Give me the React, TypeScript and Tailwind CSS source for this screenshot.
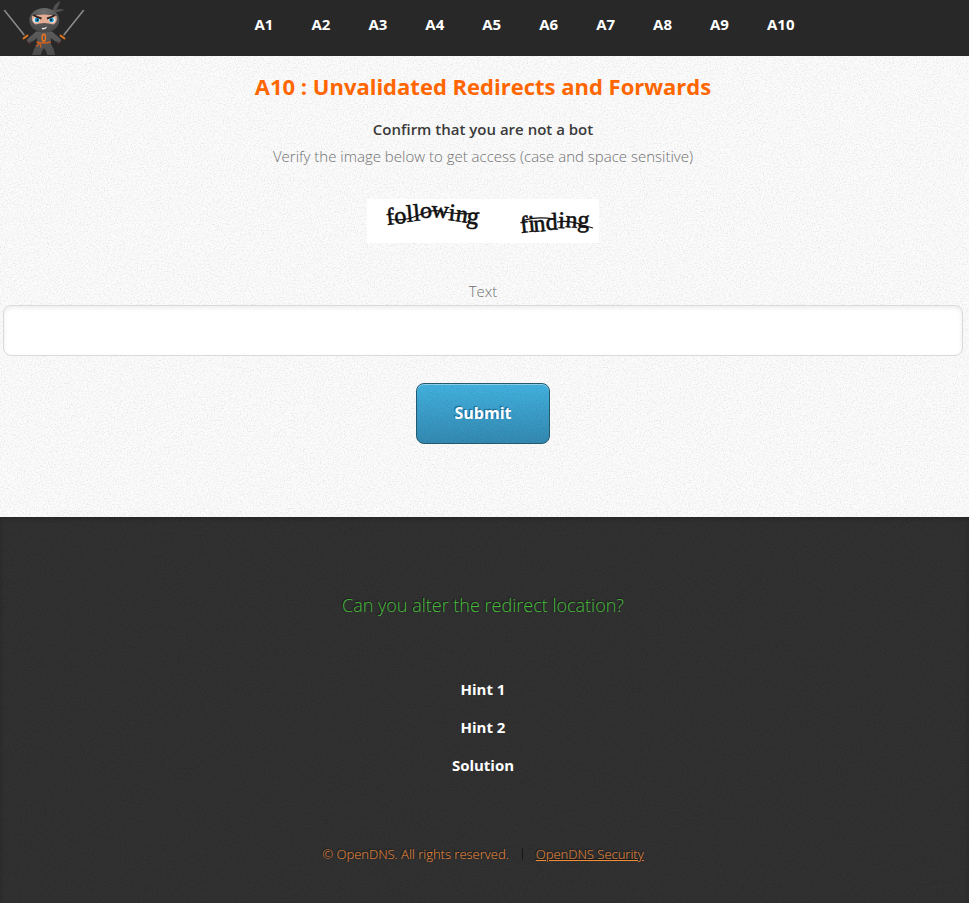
const links = ["A1", "A2", "A3", "A4", "A5", "A6", "A7", "A8", "A9", "A10"];

function Grain({ id, dark = false }: { id: string; dark?: boolean }) {
  return (
    <svg aria-hidden="true" className="pointer-events-none absolute inset-0 h-full w-full">
      <filter id={id} x="0" y="0" width="100%" height="100%">
        <feTurbulence type="fractalNoise" baseFrequency="0.7" numOctaves="3" stitchTiles="stitch" />
        <feColorMatrix
          values={
            dark
              ? "0 0 0 0 0  0 0 0 0 0  0 0 0 0 0  0.3 0 0 0 -0.12"
              : "0 0 0 0 0  0 0 0 0 0  0 0 0 0 0  0.2 0 0 0 -0.09"
          }
        />
      </filter>
      <rect width="100%" height="100%" filter={`url(#${id})`} />
    </svg>
  );
}

function Ninja() {
  return (
    <svg viewBox="0 0 88 56" className="block h-14 w-22" role="img" aria-label="Ninja">
      <defs>
        <linearGradient id="suit" x1="0" y1="0" x2="0" y2="1">
          <stop offset="0" stopColor="#5c5c5c" />
          <stop offset="1" stopColor="#4b4b4b" />
        </linearGradient>
        <radialGradient id="hood" cx="0.5" cy="0.15" r="0.85">
          <stop offset="0" stopColor="#6c6c6c" />
          <stop offset="1" stopColor="#464646" />
        </radialGradient>
      </defs>
      <path d="M53 11C53 6 56 3 60.500 1Q59 6 55.500 11ZM54 11Q59 7.500 64.500 10Q60 11.500 55 12.500Z" fill="#505050" />
      <g fill="none" strokeLinecap="round">
        <path d="M4.500 10.500 24 35M83.500 10.500 64 35" stroke="#808080" strokeWidth="1.400" />
        <path d="M5 10.500 24 34M83 10.500 64 34" stroke="#a8a8a8" strokeWidth="0.500" />
        <path d="M27 40 30 43.500M61 40 58 43.500" stroke="#5a302c" strokeWidth="1.600" />
      </g>
      <path
        d="M36 31.500Q32 35 28 38.500Q26 40.500 28.500 42.500Q33 42 37 38L37.500 43Q34 48 32 55H40.500Q41.500 51 44 48Q46.500 51 47.500 55H55Q54 48 50.500 43L51 38Q55 42 59.500 42.500Q62 40.500 60 38.500Q56 35 52 31.500Z"
        fill="url(#suit)"
      />
      <path d="M23.500 38.500 27.500 35.500M60.500 35.500 64.500 38.500" stroke="#e7781b" strokeWidth="1.800" strokeLinecap="round" />
      <ellipse cx="44.300" cy="20.300" rx="15" ry="12.300" fill="url(#hood)" />
      <path d="M32 16Q44 13 56.500 16Q58 22 53.500 24.500Q44 21.500 35.500 24.500Q31 22 32 16Z" fill="#e3ab92" />
      <ellipse cx="36.500" cy="20" rx="3.300" ry="2.700" fill="#e5f1f5" />
      <ellipse cx="52" cy="20" rx="3.300" ry="2.700" fill="#e5f1f5" />
      <circle cx="37" cy="20" r="2.300" fill="#168dc2" />
      <circle cx="51.500" cy="20" r="2.300" fill="#168dc2" />
      <circle cx="37.500" cy="20" r="1" fill="#12222b" />
      <circle cx="51" cy="20" r="1" fill="#12222b" />
      <path d="M33.500 15Q37 17.500 41.500 18.500M55 15Q51.500 17.500 47 18.500" fill="none" stroke="#2c2020" strokeWidth="1.800" />
      <path d="M41.500 28Q45 28 47 26.500Q46.500 29.500 42.500 29.500Z" fill="#e5e5e5" />
      <ellipse cx="43.800" cy="37.800" rx="1.700" ry="3.500" fill="none" stroke="#ed741c" strokeWidth="1.400" />
      <path d="M36.500 42Q43 44 51 42M39 43 36.500 46.500M40 43.500 41 47.500" fill="none" stroke="#cc6020" strokeWidth="1.400" />
    </svg>
  );
}

function Captcha() {
  return (
    <svg viewBox="0 0 232 44" className="block h-11 w-58 overflow-visible bg-white" role="img" aria-label="following finding">
      <g fill="#111" stroke="#111" strokeWidth="0.600" className="font-['Liberation_Serif',serif] text-[24px]">
        <text x="20 28 40 47 53 64 81 88 99" y="26 25 23 22 19 18 21 22 24" rotate="-6 -6 -5 -5 0 4 6 8 8">
          following
        </text>
        <text x="154 162 167 179 191 198 210" y="34 33 33 31 29 28 28" rotate="-6 -5 -5 -3 2 4 4">
          finding
        </text>
      </g>
      <g fill="none" stroke="#111" strokeWidth="1.200">
        <path d="M22 20Q36 23 52 16T76 13Q94 16 113 14" />
        <path d="M155 22Q169 17 187 20M190 23Q203 21 215 26L226 29" />
      </g>
    </svg>
  );
}

export default function App() {
  return (
    <div className="flex min-h-screen flex-col bg-[#2e2e2e] font-['Open_Sans','Noto_Sans',sans-serif] text-[15px]">
      <header className="flex h-14 items-center bg-[#282828]">
        <Ninja />
        <nav className="flex flex-1 justify-center gap-[38px] pr-2 pb-2 leading-6 font-bold text-white">
          {links.map((name) => (
            <a key={name} href={`#${name}`}>
              {name}
            </a>
          ))}
        </nav>
      </header>

      <main className="relative bg-[#fbfbfb]">
        <Grain id="paper" />
        <div className="relative flex flex-col items-center pt-3 pr-[6px] pb-[73px] pl-[3px] text-center text-[#707070]">
          <h1 className="text-[22px] leading-9 font-bold text-[#ff6600]">A10 : Unvalidated Redirects and Forwards</h1>
          <h2 className="mt-3 leading-[27px] font-semibold text-[#3a3a3a]">Confirm that you are not a bot</h2>
          <p className="leading-[27px] font-light">Verify the image below to get access (case and space sensitive)</p>
          <div className="mt-[29px]">
            <Captcha />
          </div>
          <form className="mt-[35px] flex w-full flex-col items-center" onSubmit={(e) => e.preventDefault()}>
            <label htmlFor="captcha-text" className="leading-[27px] font-light">
              Text
            </label>
            <input
              id="captcha-text"
              type="text"
              className="h-[51px] w-full rounded-lg border border-[#dadada] bg-white px-4 text-[#444] shadow-[inset_0_2px_4px_rgba(0,0,0,0.08)] outline-none"
            />
            <button
              type="submit"
              className="relative mt-[27px] h-[61px] w-[134px] overflow-hidden rounded-lg border border-[#245a70] bg-linear-to-b from-[#42b1df] to-[#3389b1] pb-[2px] text-base font-bold text-white shadow-[inset_0_1px_0_rgba(255,255,255,0.4)] [text-shadow:-1px_-1px_1px_#16618a]"
            >
              <Grain id="button-grain" />
              <span className="relative">Submit</span>
            </button>
          </form>
        </div>
      </main>

      <footer className="relative flex-1 bg-[#313131] shadow-[inset_0_2px_4px_rgba(0,0,0,0.2)]">
        <Grain id="slate" dark />
        <div className="relative flex flex-col items-center pt-[70px] pr-[6px] pl-[3px] text-center [text-shadow:-1px_-1px_1px_#181818]">
          <p className="text-lg leading-9 font-light text-[#46bc3a]">Can you alter the redirect location?</p>
          <div className="mt-[47px] flex flex-col items-center font-bold text-white">
            <button type="button" className="h-[38px]">
              Hint 1
            </button>
            <button type="button" className="h-[38px]">
              Hint 2
            </button>
            <button type="button" className="h-[38px]">
              Solution
            </button>
          </div>
          <div className="mt-[57px] flex items-center text-[13px] leading-[26px] font-light text-[#f28d3b]">
            <span>© OpenDNS. All rights reserved.</span>
            <span className="mx-[13px] h-3 w-px bg-[#181818]" />
            <a href="#security" className="underline">
              OpenDNS Security
            </a>
          </div>
        </div>
      </footer>
    </div>
  );
}
